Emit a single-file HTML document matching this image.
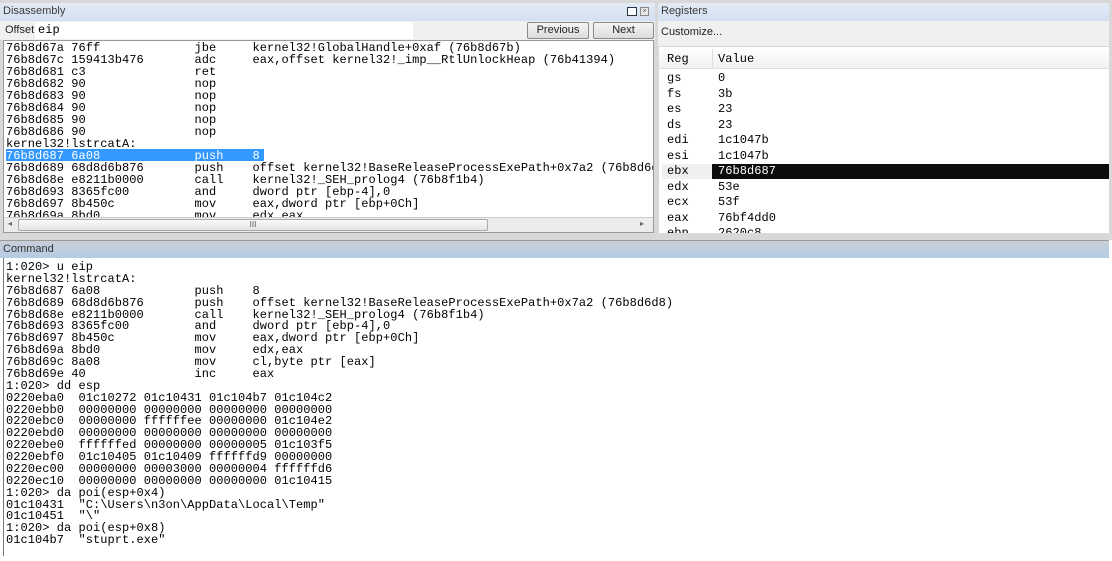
<!DOCTYPE html>
<html><head><style>
*{margin:0;padding:0;box-sizing:border-box}
body{width:1112px;height:561px;background:#fff;position:relative;overflow:hidden;font-family:"Liberation Sans",sans-serif}
.abs{position:absolute}
pre{font-family:"Liberation Mono",monospace;font-size:12px;color:#000;letter-spacing:0.05px}
.title{background:linear-gradient(#e3ebf6,#d3e0f0);font-size:11px;color:#3a3a3a;padding-left:3px;line-height:17px}
.btn{border:1px solid #8a8a8a;border-radius:2px;background:linear-gradient(#f4f4f4,#dcdcdc);font-size:11px;text-align:center;line-height:15px;color:#222}
</style></head><body>
<div class="abs" style="left:0;top:0;width:1112px;height:240px;background:#d8d8d8"></div>
<!-- Disassembly -->
<div class="abs title" style="left:0;top:3px;width:655px;height:18px">Disassembly</div>
<div class="abs" style="left:627px;top:7px;width:10px;height:9px;border:1px solid #234;background:#fff"></div>
<div class="abs" style="left:640px;top:7px;width:9px;height:9px;border:1px solid #888;background:#e6e6e6;font-size:7px;line-height:7px;text-align:center;color:#555">×</div>
<div class="abs" style="left:0;top:21px;width:655px;height:19px;background:#eef0f2"></div>
<div class="abs" style="left:5px;top:24px;font-size:11px;color:#222">Offset:</div>
<div class="abs" style="left:35px;top:22px;width:378px;height:17px;background:#fff"></div>
<pre class="abs" style="left:38px;top:23px;line-height:14px">eip</pre>
<div class="abs btn" style="left:527px;top:22px;width:62px;height:17px">Previous</div>
<div class="abs btn" style="left:593px;top:22px;width:61px;height:17px">Next</div>
<div class="abs" style="left:3px;top:40px;width:651px;height:193px;background:#fff;border:1px solid #999;overflow:hidden">
<div class="abs" style="left:2px;top:108px;width:258px;height:12px;background:#3399ff"></div>
<pre class="abs" style="left:2px;top:1px;line-height:12px">76b8d67a 76ff             jbe     kernel32!GlobalHandle+0xaf (76b8d67b)
76b8d67c 159413b476       adc     eax,offset kernel32!_imp__RtlUnlockHeap (76b41394)
76b8d681 c3               ret
76b8d682 90               nop
76b8d683 90               nop
76b8d684 90               nop
76b8d685 90               nop
76b8d686 90               nop
kernel32!lstrcatA:
<span style="color:#fff">76b8d687 6a08             push    8</span>
76b8d689 68d8d6b876       push    offset kernel32!BaseReleaseProcessExePath+0x7a2 (76b8d6d8)
76b8d68e e8211b0000       call    kernel32!_SEH_prolog4 (76b8f1b4)
76b8d693 8365fc00         and     dword ptr [ebp-4],0
76b8d697 8b450c           mov     eax,dword ptr [ebp+0Ch]
76b8d69a 8bd0             mov     edx,eax</pre>
<div class="abs" style="left:0;top:176px;width:649px;height:16px;background:#ececec;border-top:1px solid #ccc"></div>
<div class="abs" style="left:14px;top:178px;width:470px;height:12px;background:linear-gradient(#fafafa,#e4e4e4);border:1px solid #aaa;border-radius:2px;font-size:8px;text-align:center;line-height:10px;color:#555">III</div>
<div class="abs" style="left:4px;top:178px;font-size:8px;color:#666">◂</div>
<div class="abs" style="left:636px;top:178px;font-size:8px;color:#666">▸</div>
</div>
<!-- Registers -->
<div class="abs title" style="left:658px;top:3px;width:451px;height:18px">Registers</div>
<div class="abs" style="left:658px;top:21px;width:451px;height:25px;background:#eef0f2;font-size:11px;color:#222;padding:5px 3px">Customize...</div>
<div class="abs" style="left:659px;top:47px;width:450px;height:186px;background:#fff;overflow:hidden">
<div class="abs" style="left:0;top:0;width:450px;height:22px;background:linear-gradient(#fff,#f2f2f2);border-bottom:1px solid #ddd"></div>
<div class="abs" style="left:53px;top:2px;width:1px;height:20px;background:#ddd"></div>
<pre class="abs" style="left:8px;top:6px;line-height:12px">Reg</pre>
<pre class="abs" style="left:59px;top:6px;line-height:12px">Value</pre>
<div class="abs" style="left:3px;top:117px;width:50px;height:15px;background:#f0f0f0"></div>
<div class="abs" style="left:53px;top:117px;width:397px;height:15px;background:#0c0c0c"></div>
<pre class="abs" style="left:8px;top:24px;line-height:15.5px">gs
fs
es
ds
edi
esi
ebx
edx
ecx
eax
ebp</pre>
<pre class="abs" style="left:59px;top:24px;line-height:15.5px">0
3b
23
23
1c1047b
1c1047b
<span style="color:#fff">76b8d687</span>
53e
53f
76bf4dd0
2620c8</pre>
</div>
<!-- Command -->
<div class="abs title" style="left:0;top:240px;width:1109px;height:18px;background:linear-gradient(#c9cfd8,#b4cbe6);color:#333;border-top:1px solid #999;line-height:17px">Command</div>
<div class="abs" style="left:3px;top:258px;width:1px;height:298px;background:#777"></div>
<pre class="abs" style="left:6px;top:262px;line-height:11.87px">1:020&gt; u eip
kernel32!lstrcatA:
76b8d687 6a08             push    8
76b8d689 68d8d6b876       push    offset kernel32!BaseReleaseProcessExePath+0x7a2 (76b8d6d8)
76b8d68e e8211b0000       call    kernel32!_SEH_prolog4 (76b8f1b4)
76b8d693 8365fc00         and     dword ptr [ebp-4],0
76b8d697 8b450c           mov     eax,dword ptr [ebp+0Ch]
76b8d69a 8bd0             mov     edx,eax
76b8d69c 8a08             mov     cl,byte ptr [eax]
76b8d69e 40               inc     eax
1:020&gt; dd esp
0220eba0  01c10272 01c10431 01c104b7 01c104c2
0220ebb0  00000000 00000000 00000000 00000000
0220ebc0  00000000 ffffffee 00000000 01c104e2
0220ebd0  00000000 00000000 00000000 00000000
0220ebe0  ffffffed 00000000 00000005 01c103f5
0220ebf0  01c10405 01c10409 ffffffd9 00000000
0220ec00  00000000 00003000 00000004 ffffffd6
0220ec10  00000000 00000000 00000000 01c10415
1:020&gt; da poi(esp+0x4)
01c10431  "C:\Users\n3on\AppData\Local\Temp"
01c10451  "\"
1:020&gt; da poi(esp+0x8)
01c104b7  "stuprt.exe"</pre>
</body></html>
